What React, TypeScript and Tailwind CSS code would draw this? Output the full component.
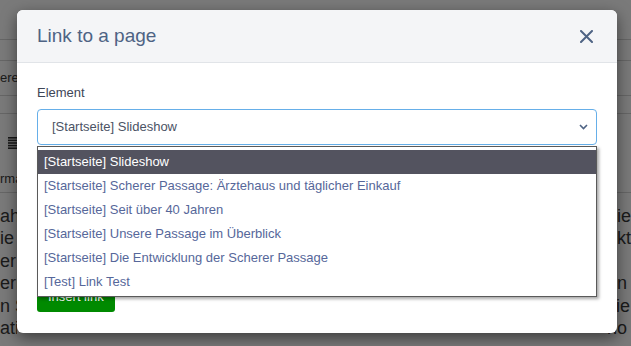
import React from "react";

const options = [
  "[Startseite] Slideshow",
  "[Startseite] Scherer Passage: Ärztehaus und täglicher Einkauf",
  "[Startseite] Seit über 40 Jahren",
  "[Startseite] Unsere Passage im Überblick",
  "[Startseite] Die Entwicklung der Scherer Passage",
  "[Test] Link Test",
];

const leftText = ["ahr", "ie b", "er", "errn", "n Sc", "atio"];
const rightText = ["nie", "ekt", "s", "ün", "zie", "no"];

export default function App() {
  return (
    <div className="relative h-[346px] w-[631px] overflow-hidden bg-white font-['Liberation_Sans',Arial,sans-serif]">
      {/* background page */}
      <div className="flex flex-col text-[#3a3a3a]">
        <div className="h-[40px] border-b border-[#d6d6d6]" />
        <div className="h-[21px] border-b border-[#d6d6d6]" />
        <div className="flex h-[35px] items-center border-b border-[#d6d6d6] text-[13px]">
          <span className="w-[17px] overflow-hidden whitespace-nowrap">ere</span>
        </div>
        <div className="h-[18px] border-b border-[#d6d6d6]" />
        <div className="flex h-[79px] flex-col border-b border-[#d6d6d6]">
          <div className="flex h-[56px] items-center pl-[8px] pt-[2px]">
            <svg width="12" height="12" viewBox="0 0 12 12">
              <rect x="0" y="0" width="12" height="1.6" fill="#333" />
              <rect x="0" y="2.6" width="12" height="1.6" fill="#333" />
              <rect x="0" y="5.2" width="12" height="1.6" fill="#333" />
              <rect x="0" y="7.8" width="12" height="1.6" fill="#333" />
              <rect x="0" y="10.4" width="12" height="1.6" fill="#333" />
            </svg>
          </div>
          <div className="w-[17px] overflow-hidden whitespace-nowrap text-[13px] leading-[18px]">rma</div>
        </div>
        <div className="flex pt-[12px] text-[18px] leading-[22.4px]">
          <div className="flex w-[17px] flex-col overflow-hidden whitespace-nowrap">
            {leftText.map((t) => (
              <span key={t}>{t}</span>
            ))}
          </div>
          <div className="w-[601px]" />
          <div className="flex flex-col whitespace-nowrap">
            {rightText.map((t) => (
              <span key={t}>{t}</span>
            ))}
          </div>
        </div>
      </div>

      {/* backdrop */}
      <div className="absolute inset-0 bg-black/[0.52]" />

      {/* modal */}
      <div className="absolute left-[17px] top-[10px] flex h-[323px] w-[600px] flex-col rounded-[6px] bg-white shadow-[0_5px_15px_rgba(0,0,0,0.5)]">
        <div className="flex h-[53px] items-center justify-between rounded-t-[6px] border-b border-[#e1e4e8] bg-[#f4f5f7] pl-[20px] pr-[24px]">
          <span className="text-[19px] text-[#4e6384]">Link to a page</span>
          <svg width="13" height="13" viewBox="0 0 13 13" className="mt-[1px]">
            <path d="M1 1L12 12M12 1L1 12" stroke="#4e6384" strokeWidth="2" strokeLinecap="round" />
          </svg>
        </div>
        <div className="flex flex-col px-[20px] pt-[21px]">
          <label className="text-[13px] leading-[18px] text-[#3e4657]">Element</label>
          <div className="relative mt-[7px]">
            <div className="flex h-[36px] w-[560px] items-center justify-between rounded-[4px] border border-[#66afe9] pl-[14px] pr-[8px] text-[13px] text-[#4b5365]">
              <span>[Startseite] Slideshow</span>
              <svg width="9" height="6" viewBox="0 0 9 6">
                <path d="M1 1L4.5 4.5L8 1" stroke="#4e6384" strokeWidth="1.6" fill="none" />
              </svg>
            </div>
            <div className="absolute left-0 top-[37px] z-10 flex w-[560px] flex-col border border-[#5a5a5a] bg-white pb-[2px] pt-[3px] shadow-[2px_2px_3px_rgba(0,0,0,0.35)]">
              {options.map((o, i) => (
                <div
                  key={o}
                  className={
                    i === 0
                      ? "flex h-[24px] items-center bg-[#53535f] pl-[6px] text-[13px] text-white"
                      : "flex h-[24px] items-center pl-[6px] text-[13px] text-[#56679a]"
                  }
                >
                  {o}
                </div>
              ))}
            </div>
          </div>
          <div className="mt-[137px]">
            <button className="flex h-[30px] items-center rounded-[3px] bg-[#008a00] px-[11px] text-[13px] text-white">
              Insert link
            </button>
          </div>
        </div>
      </div>
    </div>
  );
}
